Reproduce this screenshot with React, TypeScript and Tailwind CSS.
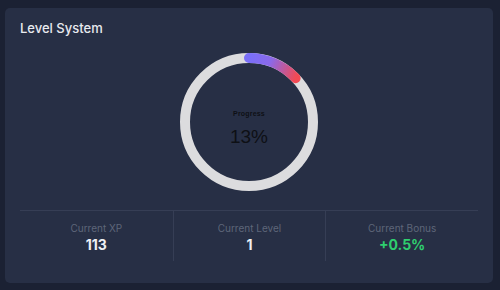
const stats = [
  { label: "Current XP", value: "113", color: "text-[#eef0f4]" },
  { label: "Current Level", value: "1", color: "text-[#eef0f4]" },
  { label: "Current Bonus", value: "+0.5%", color: "text-[#2fcf6f]" },
]

function ProgressRing({ percent }: { percent: number }) {
  const r = 64
  const a = (percent / 100) * Math.PI * 2
  const ex = 69 + r * Math.sin(a)
  const ey = 69 - r * Math.cos(a)
  return (
    <div className="relative h-[138px] w-[138px]">
      <svg width="138" height="138" viewBox="0 0 138 138">
        <defs>
          <linearGradient id="lvl" gradientUnits="userSpaceOnUse" x1="70" y1="5" x2={ex} y2={ey}>
            <stop offset="0" stopColor="#7a6ff8" />
            <stop offset="0.4" stopColor="#8a69ea" />
            <stop offset="1" stopColor="#f24a54" />
          </linearGradient>
        </defs>
        <circle cx="69" cy="69" r={r} fill="none" stroke="#dcdcde" strokeWidth="10" />
        <path
          d={`M69 5 A${r} ${r} 0 0 1 ${ex} ${ey}`}
          fill="none"
          stroke="url(#lvl)"
          strokeWidth="10"
          strokeLinecap="round"
        />
      </svg>
      <div className="absolute inset-0 flex flex-col items-center pt-[57px] font-['Liberation_Sans',Arial,sans-serif] text-[#0e1015]">
        <span className="text-[7px] leading-none font-bold tracking-[0.2px]">Progress</span>
        <span className="mt-[10px] text-[19px] leading-none">{percent}%</span>
      </div>
    </div>
  )
}

export default function App() {
  return (
    <div className="h-[290px] w-[500px] bg-[#1b2133] pt-[8px] pl-[5px] font-['Inter',sans-serif]">
      <div className="flex h-[275px] w-[488px] flex-col rounded-[5px] bg-[#272f45] px-[15px] pt-[10px]">
        <h2 className="text-[13px] leading-[20px] font-medium text-[#e8eaef]">Level System</h2>

        <div className="mt-[15px] flex justify-center">
          <ProgressRing percent={13} />
        </div>

        <div className="mt-[19px] grid grid-cols-3 border-t border-[#363e55]">
          {stats.map((s, i) => (
            <div
              key={s.label}
              className={`flex h-[50px] flex-col items-center pt-[10px] ${i > 0 ? "border-l border-[#363e55]" : ""}`}
            >
              <span className="text-[10px] leading-[14px] text-[#5e6679]">{s.label}</span>
              <span className={`mt-[1px] text-[14px] leading-[18px] font-bold ${s.color}`}>{s.value}</span>
            </div>
          ))}
        </div>
      </div>
    </div>
  )
}
